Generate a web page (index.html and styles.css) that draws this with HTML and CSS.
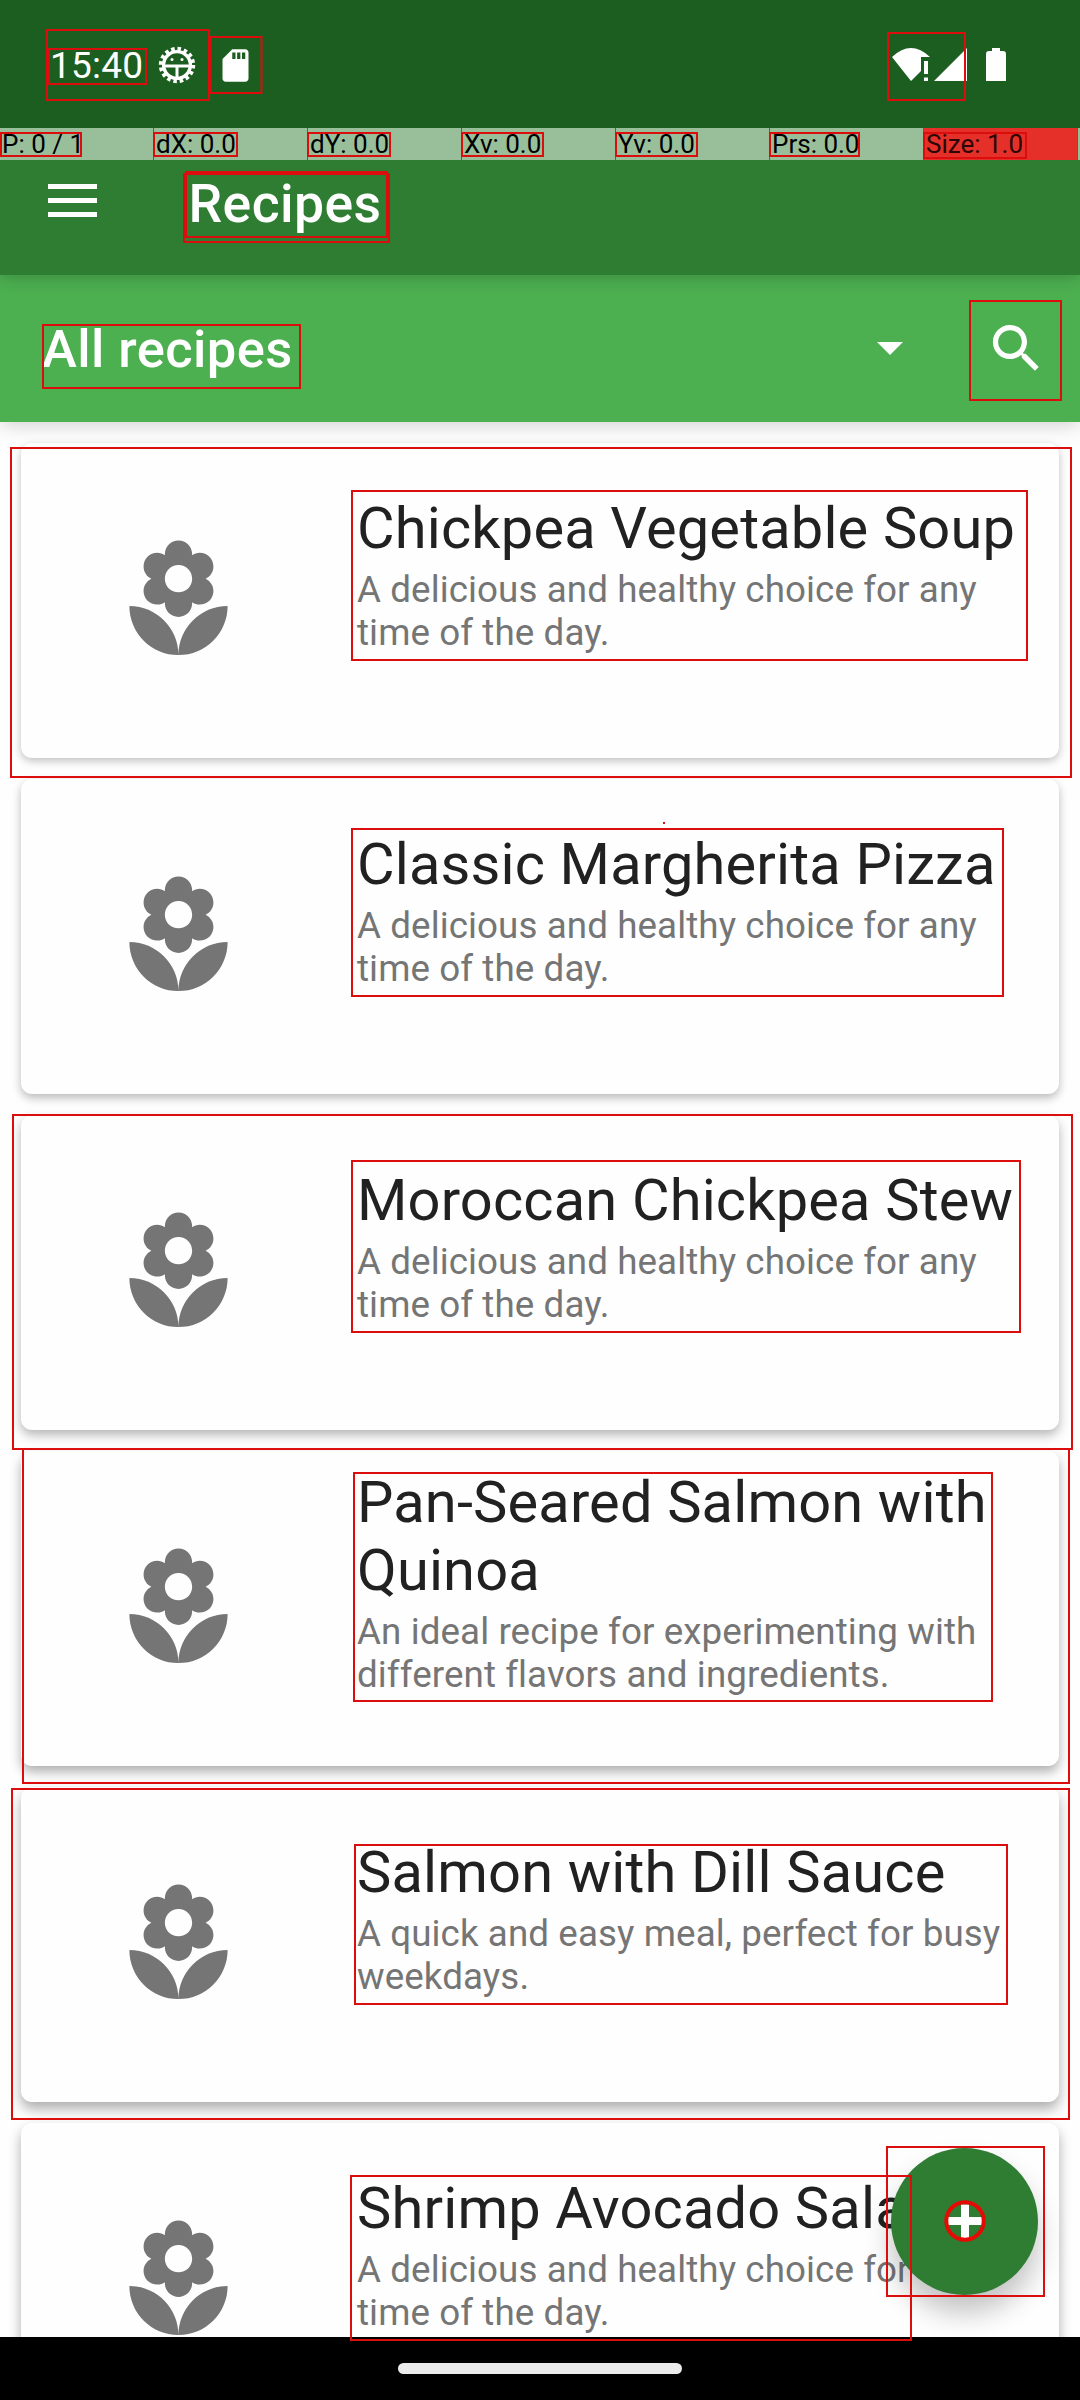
FILE: index.html
```html
<!DOCTYPE html>
<html lang="en">
<head>
<meta charset="utf-8">
<title>Recipes</title>
<link rel="stylesheet" href="styles.css">
</head>
<body>
<svg class="defs" width="0" height="0">
  <symbol id="flower" viewBox="0 0 24 24"><path d="M12 22c4.97 0 9-4.03 9-9-4.97 0-9 4.03-9 9zM5.6 10.25c0 1.38 1.12 2.5 2.5 2.5.53 0 1.01-.16 1.42-.44l-.02.19c0 1.38 1.12 2.5 2.5 2.5s2.5-1.12 2.5-2.5l-.02-.19c.4.28.89.44 1.42.44 1.38 0 2.5-1.12 2.5-2.5 0-1-.59-1.85-1.43-2.25.84-.4 1.43-1.25 1.43-2.25 0-1.38-1.12-2.5-2.5-2.5-.53 0-1.01.16-1.42.44l.02-.19C14.5 2.12 13.38 1 12 1S9.5 2.12 9.5 3.5l.02.19c-.4-.28-.89-.44-1.42-.44-1.38 0-2.5 1.12-2.5 2.5 0 1 .59 1.85 1.43 2.25-.84.4-1.43 1.25-1.43 2.25zM12 5.5c1.38 0 2.5 1.12 2.5 2.5s-1.12 2.5-2.5 2.5S9.5 9.38 9.5 8s1.12-2.5 2.5-2.5zM3 13c0 4.97 4.03 9 9 9 0-4.97-4.03-9-9-9z"/></symbol>
</svg>
<div class="screen">
  <header class="status">
    <span class="clock">15:40</span>
    <svg class="gear" viewBox="-19 -19 38 38">
      <circle r="13.400" fill="none" stroke="#fff" stroke-width="3.400"/>
      <circle r="16.200" fill="none" stroke="#fff" stroke-width="4" stroke-dasharray="3.500 2.862"/>
      <path d="M-14 1H14M0 1V15" fill="none" stroke="#fff" stroke-width="3"/>
      <circle cx="-5" cy="-5.500" r="1.500"/><circle cx="5" cy="-5.500" r="1.500"/>
    </svg>
    <svg class="sd" viewBox="0 0 24 24"><path d="M18 2h-8L4.02 8 4 20c0 1.1.9 2 2 2h12c1.1 0 2-.9 2-2V4c0-1.1-.9-2-2-2zm-6 6h-2V4h2v4zm3 0h-2V4h2v4zm3 0h-2V4h2v4z"/></svg>
    <svg class="signals" viewBox="0 0 114 33">
      <path d="M0 9Q19-9 38 9H29V23L19 33Z"/><path d="M32 13h4v13h-4zM32 29.500h4V33h-4z"/>
      <path d="M42 33L75 0V33Z"/>
      <path d="M100 0h8v3h3q3 0 3 3V33H94V6q0-3 3-3h3z"/>
    </svg>
  </header>
  <div class="debug">
    <span>P: 0 / 1</span><span>dX: 0.0</span><span>dY: 0.0</span><span>Xv: 0.0</span><span>Yv: 0.0</span><span>Prs: 0.0</span><span class="hot">Size: 1.0</span><span></span>
  </div>
  <div class="appbar">
    <svg class="menu" viewBox="0 0 49 33"><path d="M0 0h49v5H0zM0 14h49v5H0zM0 28h49v5H0z"/></svg>
    <h1>Recipes</h1>
  </div>
  <div class="filter">
    <h2>All recipes</h2>
    <svg class="caret" viewBox="0 0 26 13"><path d="M0 0h26L13 13z"/></svg>
    <svg class="search" viewBox="0 0 24 24"><path d="M15.500 14h-.79l-.28-.27C15.410 12.590 16 11.110 16 9.500 16 5.910 13.090 3 9.500 3S3 5.910 3 9.500 5.910 16 9.500 16c1.610 0 3.090-.59 4.230-1.570l.27.28v.79l5 4.990L20.490 19l-4.990-5zm-6 0C7.010 14 5 11.990 5 9.500S7.010 5 9.500 5 14 7.010 14 9.500 11.990 14 9.500 14z"/></svg>
  </div>
  <main class="list">
    <article class="card s1"><svg class="flower"><use href="#flower"/></svg><div class="info"><h3>Chickpea Vegetable Soup</h3><p>A delicious and healthy choice for any<br>time of the day.</p></div></article>
    <article class="card s2"><svg class="flower"><use href="#flower"/></svg><div class="info"><h3>Classic Margherita Pizza</h3><p>A delicious and healthy choice for any<br>time of the day.</p></div></article>
    <article class="card s3"><svg class="flower"><use href="#flower"/></svg><div class="info"><h3>Moroccan Chickpea Stew</h3><p>A delicious and healthy choice for any<br>time of the day.</p></div></article>
    <article class="card s4"><svg class="flower"><use href="#flower"/></svg><div class="info"><h3>Pan-Seared Salmon with<br>Quinoa</h3><p>An ideal recipe for experimenting with<br>different flavors and ingredients.</p></div></article>
    <article class="card s5"><svg class="flower"><use href="#flower"/></svg><div class="info"><h3>Salmon with Dill Sauce</h3><p>A quick and easy meal, perfect for busy<br>weekdays.</p></div></article>
    <article class="card s5"><svg class="flower"><use href="#flower"/></svg><div class="info"><h3>Shrimp Avocado Salad</h3><p>A delicious and healthy choice for any<br>time of the day.</p></div></article>
  </main>
  <footer class="nav"><div class="pill"></div></footer>
  <div class="fab"><svg viewBox="0 0 42 42"><path d="M17 4.500h8V17h13v8H25v13h-8V25H4v-8h13z" fill="#fff"/><circle cx="21" cy="21" r="18.700" fill="none" stroke="#e60a04" stroke-width="4"/></svg></div>
  <svg class="marks" viewBox="0 0 1080 2400">
    <rect x="47" y="30" width="162" height="70"/>
    <rect x="49" y="49" width="97" height="35"/>
    <rect x="210.500" y="37" width="51" height="56"/>
    <rect x="888" y="33" width="77" height="67"/>
    <rect x="1" y="133" width="80" height="23"/>
    <rect x="154" y="133" width="83" height="23"/>
    <rect x="308" y="133" width="82" height="23"/>
    <rect x="462" y="133" width="81" height="23"/>
    <rect x="616" y="133" width="81" height="23"/>
    <rect x="770" y="133" width="89" height="23"/>
    <rect x="924" y="133" width="102" height="25"/>
    <rect x="184" y="174" width="205" height="68"/>
    <rect x="186" y="172" width="201" height="65"/>
    <rect x="43" y="325" width="257" height="63"/>
    <rect x="970" y="301" width="91" height="99"/>
    <rect x="11" y="448" width="1060" height="329"/>
    <rect x="352" y="491" width="675" height="169"/>
    <rect x="352" y="829" width="651" height="167"/>
    <rect x="13" y="1115" width="1059" height="334"/>
    <rect x="352" y="1161" width="668" height="171"/>
    <rect x="23" y="1449" width="1046" height="334"/>
    <rect x="354" y="1473" width="638" height="228"/>
    <rect x="12" y="1789" width="1057" height="330"/>
    <rect x="355" y="1845" width="652" height="159"/>
    <rect x="351" y="2176" width="560" height="164"/>
    <rect x="887" y="2147" width="157" height="149"/>
    <path d="M663 823h2"/>
  </svg>
</div>
</body>
</html>
```
FILE: styles.css
```css
* { box-sizing: border-box; }
body { margin: 0; font-family: Roboto, "Liberation Sans", sans-serif; }
h1, h2, h3, p { margin: 0; font-weight: 400; }
svg { display: block; flex: none; fill: #fff; }
.defs { position: absolute; }

.screen {
  position: relative;
  width: 1080px;
  height: 2400px;
  overflow: hidden;
  display: flex;
  flex-direction: column;
  background: #fefefe;
}

.status {
  flex: none;
  height: 128px;
  padding: 0 74px 0 50px;
  display: flex;
  align-items: center;
  background: #1b5e20;
  color: #fff;
}
.clock { width: 108px; margin-top: 4px; font-size: 37px; line-height: 44px; letter-spacing: .2px; }
.gear { width: 38px; height: 38px; margin-top: 2px; }
.sd { width: 39px; height: 39px; margin: 2px 0 0 20px; }
.signals { width: 114px; height: 33px; margin-left: auto; }

.debug {
  flex: none;
  height: 32px;
  display: grid;
  grid-template-columns: repeat(7, 153px) 3px;
  column-gap: 1px;
  background: #2e7d32;
  font-size: 26px;
  line-height: 33px;
  color: #000;
}
.debug span { background: #98bf9a; padding-left: 2px; white-space: nowrap; overflow: hidden; }
.debug .hot { background: #e53029; color: #2c0505; }
.debug span:last-child { padding: 0; }

.appbar {
  position: relative;
  z-index: 2;
  flex: none;
  height: 115px;
  padding-left: 48px;
  display: flex;
  align-items: flex-start;
  background: #2e7d32;
  color: #fff;
  box-shadow: 0 2px 16px rgba(0, 0, 0, .22);
  clip-path: inset(0 0 -40px 0);
}
.menu { width: 49px; height: 33px; margin-top: 24px; }
.appbar h1 { margin: 13px 0 0 91.500px; font-size: 53.500px; line-height: 62px; font-weight: 500; letter-spacing: .4px; }

.filter {
  position: relative;
  z-index: 1;
  flex: none;
  height: 147px;
  padding: 0 32px 0 42px;
  display: flex;
  align-items: center;
  background: #4caf50;
  color: #fff;
  box-shadow: 0 2px 20px rgba(0, 0, 0, .2);
}
.filter h2 { font-size: 52.500px; line-height: 62px; font-weight: 500; margin-top: 1px; letter-spacing: .4px; }
.caret { width: 26px; height: 13px; margin-left: auto; }
.search { width: 63px; height: 63px; margin: -1px 0 0 82px; }

.list {
  flex: 1;
  min-height: 0;
  overflow: hidden;
  padding: 21px;
  display: flex;
  flex-direction: column;
  gap: 21px;
}
.card {
  flex: none;
  height: 315px;
  padding-left: 92px;
  display: flex;
  align-items: center;
  background: #fefefe;
  border-radius: 11px;
}
.s1 { box-shadow: 0 3px 9px rgba(0, 0, 0, .25); }
.s2 { box-shadow: 0 4px 10px rgba(0, 0, 0, .27); }
.s3 { box-shadow: 0 5px 11px rgba(0, 0, 0, .29); }
.s4 { box-shadow: 0 6px 12px rgba(0, 0, 0, .31); }
.s5 { box-shadow: 0 7px 13px rgba(0, 0, 0, .32); }
.flower { width: 131px; height: 131px; fill: #757575; }
.info {
  height: 315px;
  margin-left: 113px;
  padding-bottom: 54px;
  display: flex;
  flex-direction: column;
  justify-content: center;
  gap: 6px;
  white-space: nowrap;
}
.info h3 { font-size: 57.750px; line-height: 68px; letter-spacing: .17px; color: #212121; }
.info p { font-size: 36.750px; line-height: 43px; letter-spacing: .09px; color: #757575; font-variant-ligatures: common-ligatures; }

.nav {
  flex: none;
  height: 63px;
  display: flex;
  justify-content: center;
  padding-top: 26px;
  background: #000;
}
.pill { width: 284px; height: 11px; border-radius: 6px; background: #ebebeb; }

.fab {
  position: absolute;
  left: 891px;
  top: 2148px;
  width: 147px;
  height: 147px;
  border-radius: 50%;
  display: grid;
  place-items: center;
  background: #2e7d32;
  box-shadow: 0 18px 28px rgba(0, 0, 0, .24);
  clip-path: inset(-60px -60px -42px -60px);
}
.fab svg { width: 42px; height: 42px; margin-top: -2px; }

.marks {
  position: absolute;
  left: 0;
  top: 0;
  width: 1080px;
  height: 2400px;
  z-index: 5;
  fill: none;
  stroke: #dc0d0d;
  stroke-width: 2;
}
```
